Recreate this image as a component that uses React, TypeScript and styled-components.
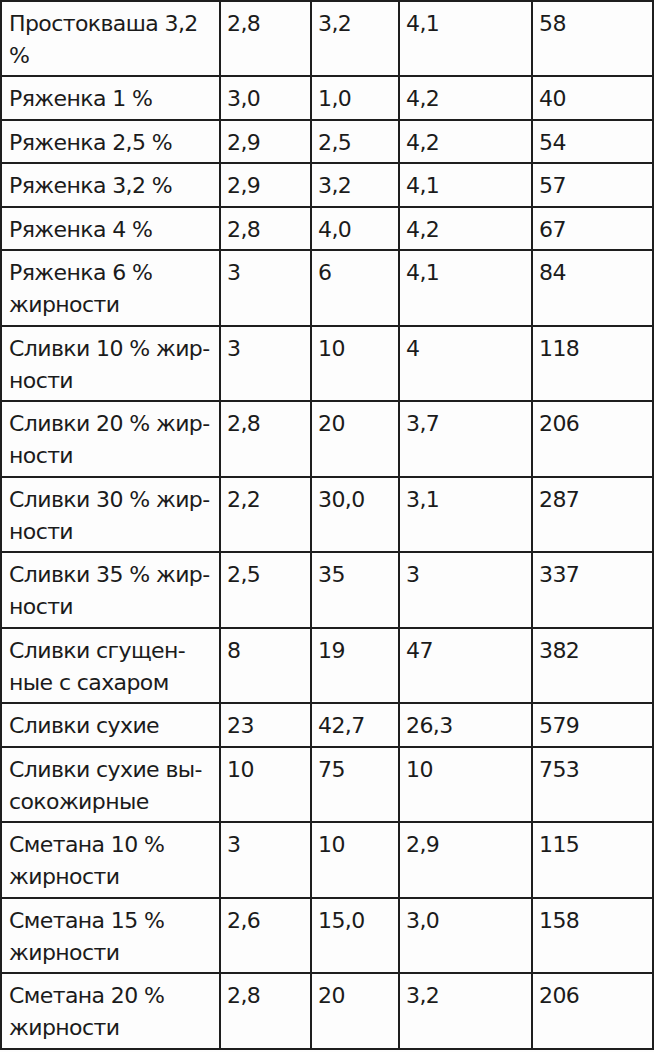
import styled, { createGlobalStyle } from "styled-components";

const GlobalStyle = createGlobalStyle`
  html, body {
    margin: 0;
    padding: 0;
    background: #fdfdfd;
  }
`;

// each name is split by hand, the way the printed table wraps it
const rows: [string[], string, string, string, string][] = [
  [["Простокваша 3,2", "%"], "2,8", "3,2", "4,1", "58"],
  [["Ряженка 1 %"], "3,0", "1,0", "4,2", "40"],
  [["Ряженка 2,5 %"], "2,9", "2,5", "4,2", "54"],
  [["Ряженка 3,2 %"], "2,9", "3,2", "4,1", "57"],
  [["Ряженка 4 %"], "2,8", "4,0", "4,2", "67"],
  [["Ряженка 6 %", "жирности"], "3", "6", "4,1", "84"],
  [["Сливки 10 % жир-", "ности"], "3", "10", "4", "118"],
  [["Сливки 20 % жир-", "ности"], "2,8", "20", "3,7", "206"],
  [["Сливки 30 % жир-", "ности"], "2,2", "30,0", "3,1", "287"],
  [["Сливки 35 % жир-", "ности"], "2,5", "35", "3", "337"],
  [["Сливки сгущен-", "ные с сахаром"], "8", "19", "47", "382"],
  [["Сливки сухие"], "23", "42,7", "26,3", "579"],
  [["Сливки сухие вы-", "сокожирные"], "10", "75", "10", "753"],
  [["Сметана 10 %", "жирности"], "3", "10", "2,9", "115"],
  [["Сметана 15 %", "жирности"], "2,6", "15,0", "3,0", "158"],
  [["Сметана 20 %", "жирности"], "2,8", "20", "3,2", "206"],
];

const colWidths = [219, 91, 88, 133, 121];

function App() {
  return (
    <>
      <GlobalStyle />
      <Table>
        <colgroup>
          {colWidths.map((w, i) => (
            <col key={i} style={{ width: w }} />
          ))}
        </colgroup>
        <tbody>
          {rows.map(([name, protein, fat, carbs, kcal], i) => (
            <tr key={i}>
              <NameCell>
                {name.map((line, j) => (
                  <Line key={j}>{line}</Line>
                ))}
              </NameCell>
              <Cell>{protein}</Cell>
              <Cell>{fat}</Cell>
              <Cell>{carbs}</Cell>
              <Cell>{kcal}</Cell>
            </tr>
          ))}
        </tbody>
      </Table>
    </>
  );
}

const Table = styled.table`
  width: 654px;
  border-collapse: collapse;
  table-layout: fixed;
  font-family: "DejaVu Sans", Verdana, sans-serif;
  font-size: 22px;
  letter-spacing: -0.6px;
  line-height: 32px;
  color: #1b1b1b;
`;

const Cell = styled.td`
  border: 2px solid #1e1e1e;
  padding: 5.8px 6px 3.7px 6px;
  vertical-align: top;
  white-space: nowrap;
`;

const NameCell = styled(Cell)`
  padding-left: 7px;
`;

const Line = styled.div``;

export default App;
